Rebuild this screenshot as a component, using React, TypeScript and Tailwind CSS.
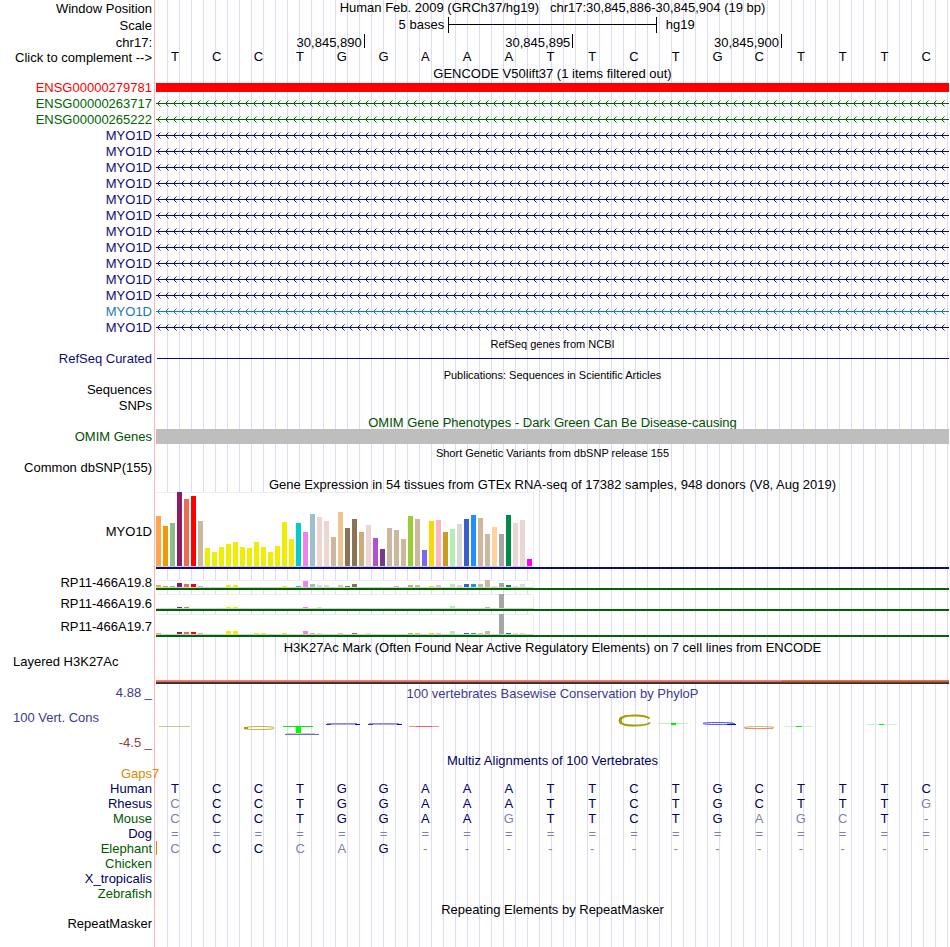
import type { ReactNode } from "react";

const GRID =
  "bg-[repeating-linear-gradient(to_right,transparent_0_11px,#dcdcfa_11px_12px)]";

/** One horizontal band: a label on the left, the drawing area on the right. */
function Row({
  label,
  height = "h-4",
  labelClass = "text-right leading-[15px]",
  children,
}: {
  label?: ReactNode;
  height?: string;
  labelClass?: string;
  children?: ReactNode;
}) {
  return (
    <div className={`flex ${height}`}>
      <div
        className={`w-[155px] shrink-0 border-r border-[#ffb4b4] pr-[2px] whitespace-pre ${labelClass}`}
      >
        {label}
      </div>
      <div className={`mx-px min-w-0 flex-1 ${GRID}`}>{children}</div>
    </div>
  );
}

function Title({
  children,
  label,
  small = false,
  color = "text-black",
}: {
  children: ReactNode;
  label?: ReactNode;
  small?: boolean;
  color?: string;
}) {
  return (
    <Row height="h-[15px]" label={label}>
      <h2
        className={`text-center leading-[17px] whitespace-pre ${small ? "text-[11px]" : "text-[13px]"} ${color}`}
      >
        {children}
      </h2>
    </Row>
  );
}

function Bases({ seq, match }: { seq: string; match?: string }) {
  return (
    <div className="grid grid-cols-19 text-center leading-[15px]">
      {seq.split("").map((base, i) => (
        <span
          key={i}
          className={`pr-1 ${match === undefined ? "" : match[i] === base ? "text-[#00005f]" : "text-[#8080b0]"}`}
        >
          {base}
        </span>
      ))}
    </div>
  );
}

/** Intron line with strand arrows pointing left every 8 pixels. */
function Transcript({ id, color }: { id: string; color: string }) {
  return (
    <svg className={`block h-4 w-full ${color}`} aria-hidden="true">
      <defs>
        <pattern id={id} width="8" height="16" patternUnits="userSpaceOnUse">
          <path
            d="M2 6h1v1h-1z M3 5h1v1h-1z M2 8h1v1h-1z M3 9h1v1h-1z"
            fill="currentColor"
          />
          <path d="M4 4h1v1h-1z M4 10h1v1h-1z" fill="currentColor" opacity="0.5" />
        </pattern>
      </defs>
      <rect width="100%" height="16" fill={`url(#${id})`} />
      <rect y="7" width="100%" height="1" fill="currentColor" />
    </svg>
  );
}

const NAVY = "text-[#0c0c78]";
const GREEN = "text-[#006400]";
const transcripts = [
  { name: "ENSG00000263717", color: GREEN },
  { name: "ENSG00000265222", color: GREEN },
  ...Array.from({ length: 11 }, () => ({ name: "MYO1D", color: NAVY })),
  { name: "MYO1D", color: "text-[#1e78b4]" },
  { name: "MYO1D", color: NAVY },
];

const tissueColors = [
  "#ffa54f", "#ee9a00", "#8fbc8f", "#8b1c62", "#ee6a50", "#ff0000", "#cdb79e",
  "#eeee00", "#eeee00", "#eeee00", "#eeee00", "#eeee00", "#eeee00", "#eeee00",
  "#eeee00", "#eeee00", "#eeee00", "#eeee00", "#eeee00", "#eeee00", "#00cdcd",
  "#ee82ee", "#9ac0cd", "#eed5d2", "#eed5d2", "#cdb79e", "#eec591", "#8b7355",
  "#8b7355", "#cdaa7d", "#eed5d2", "#b452cd", "#7a378b", "#cdb79e", "#cdb79e",
  "#cdb79e", "#9acd32", "#cdb79e", "#7b68ee", "#ffd700", "#ffb6c1", "#cd9b1d",
  "#b4eeb4", "#d9d9d9", "#3a5fcd", "#1e90ff", "#cdb79e", "#cdb79e", "#ffd39b",
  "#a6a6a6", "#008b45", "#eed5d2", "#eed5d2", "#ff00ff",
];

const myo1d = [
  50, 40, 43, 74, 67, 70, 45, 18, 14, 19, 22, 24, 19, 18, 24, 19, 14, 20, 44,
  27, 43, 34, 52, 49, 45, 29, 54, 38, 47, 34, 41, 28, 17, 38, 36, 27, 50, 47,
  16, 45, 46, 34, 37, 42, 47, 51, 48, 32, 39, 32, 51, 43, 46, 7,
];
const rp8 = [
  2, 1, 1, 4, 3, 3, 1, 0, 0, 0, 2, 2, 0, 0, 0, 0, 0, 0, 1, 0, 1, 6, 3, 2, 2, 0,
  2, 1, 3, 0, 0, 0, 0, 0, 1, 0, 2, 2, 0, 1, 2, 0, 3, 2, 3, 3, 3, 7, 1, 4, 2, 1,
  3, 0,
];
const rp6 = [
  0, 0, 0, 1, 1, 0, 0, 0, 0, 0, 1, 1, 0, 0, 0, 0, 0, 0, 0, 0, 0, 1, 0, 1, 0, 0,
  0, 0, 0, 0, 0, 0, 0, 0, 0, 0, 0, 0, 0, 0, 0, 0, 2, 0, 0, 0, 0, 1, 0, 14, 0, 0,
  0, 0,
];
const rp7 = [
  1, 0, 0, 2, 2, 2, 1, 0, 0, 0, 3, 3, 0, 0, 1, 1, 0, 0, 1, 0, 0, 3, 1, 1, 0, 0,
  1, 0, 1, 0, 1, 0, 0, 0, 0, 0, 1, 1, 0, 1, 1, 0, 3, 0, 1, 1, 1, 3, 0, 20, 1, 1,
  1, 0,
];

/** Bar chart of expression per tissue, standing on the gene's own line. */
function Expression({
  values,
  size,
  line,
}: {
  values: number[];
  size: string;
  line: string;
}) {
  return (
    <div className="flex h-full flex-col justify-end">
      <div
        className={`flex w-[378px] items-end gap-[2px] border-r border-b border-r-[#eeeeee] border-b-[#d0d0d0] bg-white shadow-[inset_0_1px_0_#eeeeee] ${size}`}
      >
        {values.map((v, i) => (
          <div
            key={i}
            className="w-[5px] shrink-0"
            style={{ height: v, backgroundColor: tissueColors[i] }}
          />
        ))}
      </div>
      <div className={`h-[2px] ${line}`} />
    </div>
  );
}

/** Sequence logo of conservation scores, one mark per base. */
function ConservationLogo() {
  const olive = "#a0a000";
  return (
    <svg
      className="block h-full w-full"
      viewBox="0 0 793 51"
      preserveAspectRatio="none"
      fill="none"
      role="img"
      aria-label="Conservation logo"
    >
      <rect x="3" y="25" width="31" height="1" fill="#c8c880" />
      <path d="M118 26.5 Q115 25.5 104 25.5 Q88 25.5 88 27.5 Q88 28.5 104 28.5 Q115 28.5 118 27.5" stroke="#b8b840" />
      <rect x="88" y="26" width="4" height="2" fill={olive} />
      <rect x="127" y="25" width="30" height="1" fill="#00f000" />
      <rect x="140" y="26" width="5" height="6" fill="#00ff00" />
      <rect x="130" y="32" width="29" height="1" fill="#d0d090" />
      <rect x="129" y="33" width="34" height="1" fill="#6666ff" />
      {[170, 212].map((x) => (
        <g key={x}>
          <rect x={x + 1} y="22" width="30" height="1" fill="#8c8cf6" />
          <rect x={x} y="23" width="34" height="1" fill="#a0a0ff" />
          <rect x={x} y="23" width="5" height="1" fill="#3030ff" />
          <rect x={x + 29} y="23" width="5" height="1" fill="#0000ff" />
        </g>
      ))}
      <rect x="253" y="25" width="30" height="1" fill="#ff8888" />
      <rect x="260" y="25" width="16" height="1" fill="#f06060" />
      <path d="M493.5 17.5 C489 14 481 14.5 478 14.5 C468 14.5 464 17 464 19.5 C464 22.5 469 24.5 478 24.5 C486 24.5 492 24 494 21.5" stroke={olive} strokeWidth="2" />
      <path d="M465.5 17 Q462.5 19.5 465.5 22" stroke={olive} strokeWidth="3" />
      <rect x="502" y="22" width="30" height="1" fill="#b8f4b8" />
      <rect x="515" y="22" width="5" height="2" fill="#00f000" />
      <path d="M577 22 Q570 21.5 562 21.5 Q547 21.5 547 22.5 Q548 23.5 562 23.5 Q574 23.5 579 22.5" stroke="#5050ff" />
      <rect x="571" y="23" width="9" height="1" fill="#0000ff" />
      <ellipse cx="603" cy="26.5" rx="15" ry="1" stroke="#c8c060" />
      <rect x="589" y="27" width="28" height="1" fill="#ff8080" />
      <rect x="628" y="25" width="30" height="1" fill="#c8f6c8" />
      <rect x="640" y="25" width="6" height="1" fill="#00f000" />
      <rect x="711" y="23" width="30" height="1" fill="#c8f6c8" />
      <rect x="723" y="23" width="5" height="1" fill="#00f000" />
    </svg>
  );
}

const HUMAN = "TCCTGGAAATTCTGCTTTC";
const DARK_GREEN = "text-[#005a00]";
const DARK_NAVY = "text-[#00005f]";
const species = [
  { name: "Human", seq: HUMAN, color: DARK_NAVY },
  { name: "Rhesus", seq: "CCCTGGAAATTCTGCTTTG", color: DARK_NAVY },
  { name: "Mouse", seq: "CCCTGGAAGTTCTGAGCT-", color: DARK_GREEN },
  { name: "Dog", seq: "===================", color: DARK_NAVY },
  { name: "Elephant", seq: "CCCCAG-------------", color: DARK_GREEN },
  { name: "Chicken", seq: "", color: DARK_GREEN },
  { name: "X_tropicalis", seq: "", color: DARK_NAVY },
  { name: "Zebrafish", seq: "", color: DARK_GREEN },
];

export default function App() {
  return (
    <main className="flex min-h-screen flex-col overflow-hidden bg-white font-['Liberation_Sans',Arial,sans-serif] text-[13px] text-black">
      <Row label="Window Position" labelClass="text-right leading-[17px]">
        <h1 className="text-center leading-[15px] whitespace-pre">
          {"Human Feb. 2009 (GRCh37/hg19)   chr17:30,845,886-30,845,904 (19 bp)"}
        </h1>
      </Row>
      <Row label="Scale" height="h-[17px]" labelClass="text-right leading-[19px]">
        <div className="grid h-full grid-cols-19 leading-[17px]">
          <div className="col-span-7 pr-1 text-right">5 bases</div>
          <div className="col-span-5 mt-px h-4 border-x border-black pt-[7px]">
            <div className="h-px w-full bg-black" />
          </div>
          <div className="col-span-7 pl-[9px]">hg19</div>
        </div>
      </Row>
      <Row label="chr17:" labelClass="text-right leading-[19px]">
        <div className="grid grid-cols-19 pt-px text-right leading-[17px]">
          {["30,845,890", "30,845,895", "30,845,900"].map((p) => (
            <div key={p} className="col-span-5 h-[14px] border-r border-black pr-[2px]">
              {p}
            </div>
          ))}
        </div>
      </Row>
      <Row
        label={
          <button type="button" className="block w-full text-right">
            {"Click to complement -->"}
          </button>
        }
        labelClass="leading-[17px]"
      >
        <Bases seq={HUMAN} />
      </Row>

      <Title>GENCODE V50lift37 (1 items filtered out)</Title>
      <Row label={<span className="text-[#ff0000]">ENSG00000279781</span>}>
        <div className="pt-[3px]">
          <div className="h-[9px] w-full bg-[#ff0000]" />
        </div>
      </Row>
      {transcripts.map((t, i) => (
        <Row key={i} label={<span className={t.color}>{t.name}</span>}>
          <Transcript id={`strand-${i}`} color={t.color} />
        </Row>
      ))}

      <Title small>RefSeq genes from NCBI</Title>
      <Row label={<span className={NAVY}>RefSeq Curated</span>}>
        <div className="ml-px pt-[7px]">
          <div className="h-px bg-[#0c0c78]" />
        </div>
      </Row>

      <Title small>Publications: Sequences in Scientific Articles</Title>
      <Row label="Sequences" />
      <Row label="SNPs" />

      <Title color="text-[#005000]">
        OMIM Gene Phenotypes - Dark Green Can Be Disease-causing
      </Title>
      <Row label={<span className="text-[#005000]">OMIM Genes</span>}>
        <div className="h-[15px] bg-[#bebebe]" />
      </Row>

      <Title small>Short Genetic Variants from dbSNP release 155</Title>
      <Row label="Common dbSNP(155)" />

      <Title>
        Gene Expression in 54 tissues from GTEx RNA-seq of 17382 samples, 948 donors (V8, Aug 2019)
      </Title>
      <Row label="MYO1D" height="h-[78px]" labelClass="text-right leading-[82px]">
        <Expression values={myo1d} size="h-[75px]" line="bg-[#0c0c78]" />
      </Row>
      <Row label="RP11-466A19.8" height="h-[21px]" labelClass="text-right leading-[27px]">
        <Expression values={rp8} size="h-[8px]" line="bg-[#006400]" />
      </Row>
      <Row label="RP11-466A19.6" height="h-[21px]" labelClass="text-right leading-[27px]">
        <Expression values={rp6} size="h-[15px]" line="bg-[#006400]" />
      </Row>
      <Row label="RP11-466A19.7" height="h-[26px]" labelClass="text-right leading-[31px]">
        <Expression values={rp7} size="h-[21px]" line="bg-[#006400]" />
      </Row>

      <Row height="h-[17px]">
        <h2 className="pt-[3px] text-center leading-[15px]">
          H3K27Ac Mark (Often Found Near Active Regulatory Elements) on 7 cell lines from ENCODE
        </h2>
      </Row>
      <Row label="Layered H3K27Ac" height="h-[30px]" labelClass="pl-[13px] leading-[15px]">
        <div className="flex h-full flex-col justify-end">
          <div className="grid grid-cols-19">
            <div className="col-span-15 h-[2px] border-b border-[#f06450] bg-[#ff7d78]" />
            <div className="col-span-4 h-[2px] border-b border-[#d25a28] bg-[#ff6941]" />
            <div className="col-span-15 h-px bg-[#3c4632]" />
            <div className="col-span-4 h-px bg-[#505028]" />
          </div>
          <div className="h-px bg-[#323232]" />
        </div>
      </Row>

      <Row
        height="h-[17px]"
        label={<span className="text-[#3c3c8c]">4.88 _</span>}
        labelClass="text-right leading-[18px]"
      >
        <h2 className="pt-[2px] text-center leading-[15px] text-[#3c3c8c]">
          100 vertebrates Basewise Conservation by PhyloP
        </h2>
      </Row>
      <div className="flex h-[51px]">
        <div className="flex w-[155px] shrink-0 flex-col justify-between border-r border-[#ffb4b4] pt-[9px] pr-[2px] pb-[2px] leading-[15px]">
          <div className="pl-[13px] text-[#3c3c8c]">100 Vert. Cons</div>
          <div className="text-right text-[#8c3c3c]">-4.5 _</div>
        </div>
        <div className={`mx-px min-w-0 flex-1 ${GRID}`}>
          <ConservationLogo />
        </div>
      </div>

      <Title color="text-[#00005f]">Multiz Alignments of 100 Vertebrates</Title>
      <Row
        height="h-[14px]"
        label={<span className="text-[#e18700]">Gaps</span>}
        labelClass="text-right leading-[14px]"
      >
        <div className="-ml-1 leading-[14px] text-[#e18700]">7</div>
      </Row>
      {species.map((s) => (
        <Row
          key={s.name}
          height="h-[15px]"
          label={<span className={s.color}>{s.name}</span>}
        >
          <div
            className={
              s.name === "Elephant"
                ? "h-[14px] shadow-[inset_1px_0_0_#e18700]"
                : "h-[14px]"
            }
          >
            <Bases seq={s.seq} match={HUMAN} />
          </div>
        </Row>
      ))}

      <Title>Repeating Elements by RepeatMasker</Title>
      <Row label="RepeatMasker" height="min-h-[30px] flex-1" />
    </main>
  );
}
